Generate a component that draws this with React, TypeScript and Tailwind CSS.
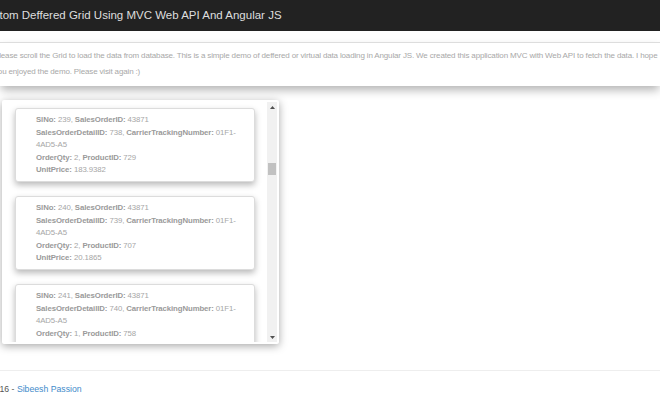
const font = "font-['Liberation_Sans',Arial,sans-serif]";

type Row = {
  slNo: number;
  orderId: number;
  detailId: number;
  qty: number;
  productId: number;
  price: string;
};

const rows: Row[] = [
  { slNo: 239, orderId: 43871, detailId: 738, qty: 2, productId: 729, price: "183.9382" },
  { slNo: 240, orderId: 43871, detailId: 739, qty: 2, productId: 707, price: "20.1865" },
  { slNo: 241, orderId: 43871, detailId: 740, qty: 1, productId: 758, price: "874.794" },
];

function Card({ row }: { row: Row }) {
  return (
    <div className="h-[74px] shrink-0 rounded-[3px] border border-[#dcdcdc] bg-white pl-[20px] pr-[4px] pt-[5px] shadow-[0_3px_6px_rgba(0,0,0,0.28)]">
      <div className="text-[7.8px] leading-[12.6px] tracking-[-0.1px] text-[#a6a6a6]">
        <div>
          <b className="font-bold text-[#9a9a9a]">SlNo:</b> {row.slNo},{" "}
          <b className="font-bold text-[#9a9a9a]">SalesOrderID:</b> {row.orderId}
        </div>
        <div>
          <b className="font-bold text-[#9a9a9a]">SalesOrderDetailID:</b> {row.detailId},{" "}
          <b className="font-bold text-[#9a9a9a]">CarrierTrackingNumber:</b> 01F1-
          <br />
          4AD5-A5
        </div>
        <div>
          <b className="font-bold text-[#9a9a9a]">OrderQty:</b> {row.qty},{" "}
          <b className="font-bold text-[#9a9a9a]">ProductID:</b> {row.productId}
        </div>
        <div>
          <b className="font-bold text-[#9a9a9a]">UnitPrice:</b> {row.price}
        </div>
      </div>
    </div>
  );
}

// Barre de défilement dessinée (la barre native est trop large à cette échelle).
function Scrollbar() {
  return (
    <div className="flex w-[10px] shrink-0 flex-col bg-[#f1f1f1]">
      <div className="flex h-[10px] items-center justify-center">
        <svg width="5" height="3" viewBox="0 0 5 3">
          <path d="M0 3 L2.5 0 L5 3 Z" fill="#505050" />
        </svg>
      </div>
      <div className="flex-1 pt-[51px]">
        <div className="mx-[1px] h-[12px] bg-[#c1c1c1]" />
      </div>
      <div className="flex h-[10px] items-center justify-center">
        <svg width="5" height="3" viewBox="0 0 5 3">
          <path d="M0 0 L2.5 3 L5 0 Z" fill="#505050" />
        </svg>
      </div>
    </div>
  );
}

export default function App() {
  return (
    <div className={`h-[400px] w-[660px] overflow-hidden bg-white ${font}`}>
      <header className="flex h-[31px] items-center bg-[#222222]">
        <span className="-ml-[21px] whitespace-nowrap text-[11.5px] text-[#dedede]">
          Custom Deffered Grid Using MVC Web API And Angular JS
        </span>
      </header>

      <section className="mt-[11px] h-[44px] border-t border-[#dddddd] bg-white shadow-[0_5px_9px_-1px_rgba(0,0,0,0.3)]">
        <p className="-ml-[6px] w-[668px] pt-[5px] text-[8px] leading-[16px] tracking-[-0.15px] text-[#a8a8a8]">
          Please scroll the Grid to load the data from database. This is a simple demo of deffered or
          virtual data loading in Angular JS. We created this application MVC with Web API to fetch
          the data. I hope you enjoyed the demo. Please visit again :)
        </p>
      </section>

      <div className="ml-[2px] mt-[14px] flex h-[244px] w-[277px] overflow-hidden rounded-[2px] bg-white py-[2px] pr-[2px] shadow-[0_2px_8px_rgba(0,0,0,0.35)]">
        <div className="flex flex-1 flex-col gap-[14px] overflow-hidden pl-[13px] pr-[12px] pt-[6px]">
          {rows.map((r) => (
            <Card key={r.slNo} row={r} />
          ))}
        </div>
        <Scrollbar />
      </div>

      <footer className="mt-[26px] border-t border-[#eeeeee] pt-[12px]">
        <p className="-ml-[19px] text-[8.7px] leading-[12px] text-[#555555]">
          © 2016 - <a className="text-[#428bca]">Sibeesh Passion</a>
        </p>
      </footer>
    </div>
  );
}
